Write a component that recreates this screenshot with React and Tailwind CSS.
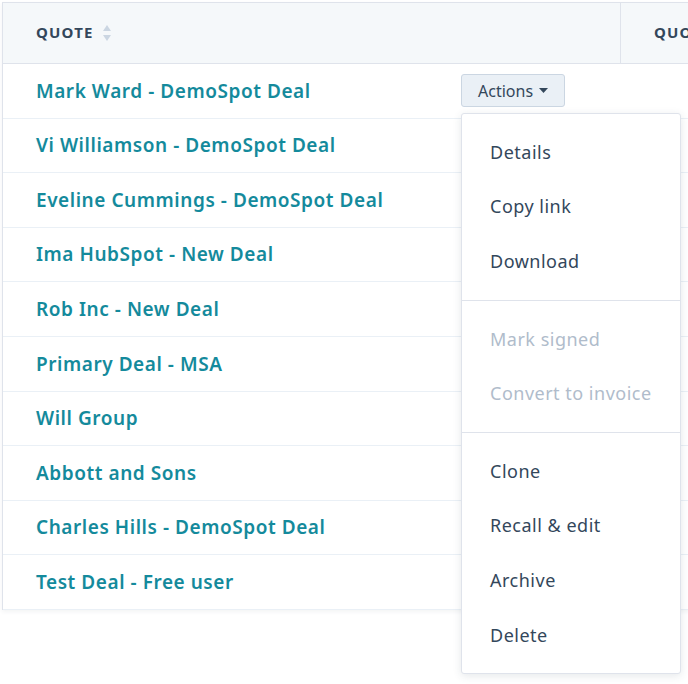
import React from 'react';

const quotes = [
  'Mark Ward - DemoSpot Deal',
  'Vi Williamson - DemoSpot Deal',
  'Eveline Cummings - DemoSpot Deal',
  'Ima HubSpot - New Deal',
  'Rob Inc - New Deal',
  'Primary Deal - MSA',
  'Will Group',
  'Abbott and Sons',
  'Charles Hills - DemoSpot Deal',
  'Test Deal - Free user',
];

const menuGroups = [
  [{ label: 'Details' }, { label: 'Copy link' }, { label: 'Download' }],
  [{ label: 'Mark signed', disabled: true }, { label: 'Convert to invoice', disabled: true }],
  [{ label: 'Clone' }, { label: 'Recall & edit' }, { label: 'Archive' }, { label: 'Delete' }],
];

const SortIcon = () => (
  <svg width="10" height="20" viewBox="0 0 10 20" className="ml-[8px]">
    <path d="M5 2 L9 8 L1 8 Z" fill="#cbd6e2" />
    <path d="M5 18 L9 12 L1 12 Z" fill="#cbd6e2" />
  </svg>
);

const ActionsMenu = () => (
  <div className="absolute left-[461px] top-[113px] w-[220px] bg-white border border-[#dfe3eb] rounded-[3px] shadow-[0_2px_8px_rgba(45,62,80,0.12)] z-10">
    {menuGroups.map((group, gi) => (
      <div key={gi} className={`py-[11px] ${gi > 0 ? 'border-t border-[#dfe3eb]' : ''}`}>
        {group.map((item) => (
          <div
            key={item.label}
            className={`h-[54.6px] flex items-center pl-[28px] text-[18px] tracking-[0.5px] whitespace-nowrap ${item.disabled ? 'text-[#b0bccb]' : 'text-[#33475b]'}`}
          >
            {item.label}
          </div>
        ))}
      </div>
    ))}
  </div>
);

const App = () => {
  return (
    <div className="relative w-[688px] h-[684px] bg-white overflow-hidden" style={{ fontFamily: '"Noto Sans", "Open Sans", sans-serif' }}>
      <div className="pt-[2px] pl-[2px]">
        <div className="w-[800px] border-l border-t border-[#dfe3eb] shadow-[0_2px_4px_rgba(45,62,80,0.06)]">
          {/* en-tête */}
          <div className="flex h-[61px] bg-[#f5f8fa] border-b border-[#dfe3eb]">
            <div className="w-[618px] shrink-0 flex items-center pl-[33px] pb-[1px] border-r border-[#dfe3eb]">
              <span className="text-[15px] font-bold tracking-[1.2px] text-[#33475b]">QUOTE</span>
              <SortIcon />
            </div>
            <div className="flex-1 flex items-center pl-[33px] pb-[1px] whitespace-nowrap">
              <span className="text-[15px] font-bold tracking-[1.2px] text-[#33475b]">QUOTE STATUS</span>
            </div>
          </div>

          {/* lignes */}
          {quotes.map((q, i) => (
            <div key={q} className="flex h-[54.6px] border-b border-[#eaf0f6] bg-white">
              <div className="w-[618px] shrink-0 flex items-center pl-[33px]">
                <span className="w-[425px] text-[19px] font-semibold tracking-[0.55px] whitespace-nowrap text-[#148a9c]">{q}</span>
                {i === 0 && (
                  <button className="h-[33px] px-[16px] bg-[#eaf0f6] border border-[#cbd6e2] rounded-[3px] flex items-center gap-[6px] text-[16px] text-[#33475b]">
                    Actions
                    <svg width="9" height="5" viewBox="0 0 9 5">
                      <path d="M0 0 L9 0 L4.5 5 Z" fill="#33475b" />
                    </svg>
                  </button>
                )}
              </div>
              <div className="flex-1" />
            </div>
          ))}
        </div>
      </div>
      <ActionsMenu />
    </div>
  );
};

export default App;
